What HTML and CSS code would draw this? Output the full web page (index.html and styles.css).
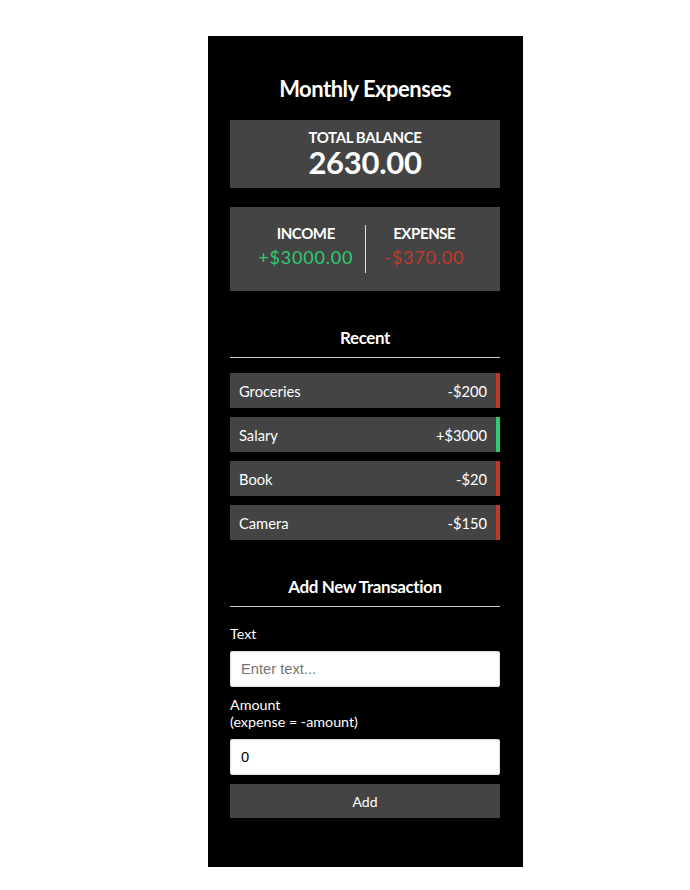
FILE: index.html
```html
<!DOCTYPE html>
<html lang="en">
<head>
<meta charset="utf-8">
<title>Monthly Expenses</title>
<link rel="stylesheet" href="styles.css">
</head>
<body>
<div class="page">
  <div class="app">
    <h2 class="title">Monthly Expenses</h2>
    <div class="balance">
      <h4 class="balance-label">TOTAL BALANCE</h4>
      <h1 class="balance-value">2630.00</h1>
    </div>
    <div class="inc-exp">
      <div class="col">
        <h4 class="col-label">INCOME</h4>
        <p class="money plus">+$3000.00</p>
      </div>
      <div class="col">
        <h4 class="col-label">EXPENSE</h4>
        <p class="money minus">-$370.00</p>
      </div>
    </div>
    <h3 class="section">Recent</h3>
    <ul class="list">
      <li class="item minus-item"><span>Groceries</span><span>-$200</span></li>
      <li class="item plus-item"><span>Salary</span><span>+$3000</span></li>
      <li class="item minus-item"><span>Book</span><span>-$20</span></li>
      <li class="item minus-item"><span>Camera</span><span>-$150</span></li>
    </ul>
    <h3 class="section section-add">Add New Transaction</h3>
    <form class="form">
      <div class="control">
        <label class="label" for="text">Text</label>
        <input class="input" type="text" id="text" placeholder="Enter text...">
      </div>
      <div class="control">
        <label class="label" for="amount">Amount <br>(expense = -amount)</label>
        <input class="input" type="number" id="amount" value="0">
      </div>
      <button class="btn" type="button">Add</button>
    </form>
  </div>
</div>
</body>
</html>
```
FILE: styles.css
```css
* { box-sizing: border-box; }
html, body { margin: 0; padding: 0; background: #fff; }
body { font-family: "Lato", "Liberation Sans", sans-serif; }
.page {
  padding: 36px 0 0 208px;
}
.app {
  width: 315px;
  background: #000;
  color: #fff;
  padding: 39px 23px 49px 22px;
}
.title {
  margin: 0 0 17px;
  text-align: center;
  font-size: 22px;
  font-weight: 700;
  letter-spacing: -0.5px;
  line-height: 28px;
}
.balance {
  background: #444;
  height: 68px;
  padding-top: 8px;
  text-align: center;
}
.balance-label {
  margin: 0;
  font-size: 15px;
  font-weight: 700;
  letter-spacing: -0.4px;
  line-height: 18px;
}
.balance-value {
  margin: 0;
  font-size: 31px;
  font-weight: 700;
  letter-spacing: -0.3px;
  line-height: 32px;
}
.inc-exp {
  background: #444;
  margin-top: 19px;
  height: 84px;
  display: flex;
  align-items: center;
  padding: 18px 17px;
}
.col {
  flex: 1;
  text-align: center;
  height: 100%;
}
.col:first-child { border-right: 1px solid #ddd; }
.col-label {
  margin: 0 0 4px;
  font-size: 15px;
  font-weight: 700;
  letter-spacing: -0.4px;
  line-height: 16px;
}
.money {
  margin: 0;
  font-size: 18px;
  letter-spacing: 0.8px;
  line-height: 24px;
}
.plus { color: #2ecc71; }
.minus { color: #c0392b; }
.section {
  margin: 36px 0 15px;
  padding-bottom: 8px;
  border-bottom: 1px solid #ccc;
  text-align: center;
  font-size: 17px;
  font-weight: 700;
  letter-spacing: -0.4px;
  line-height: 22px;
}
.list {
  list-style: none;
  margin: 0;
  padding: 0;
  display: flex;
  flex-direction: column;
  gap: 9px;
}
.item {
  background: #444;
  height: 35px;
  display: flex;
  justify-content: space-between;
  align-items: center;
  padding: 0 9px 0 9px;
  font-size: 14.7px;
  border-right: 4px solid transparent;
}
.minus-item { border-right-color: #c0392b; }
.plus-item { border-right-color: #2ecc71; }
.section-add { margin-top: 36px; margin-bottom: 14px; }
.form { margin-top: 0; }
.control { margin-top: 18px; }
.label {
  display: block;
  font-size: 14.3px;
  line-height: 17px;
  margin-bottom: 9px;
}
.input {
  display: block;
  width: 100%;
  height: 36px;
  border: 1px solid #ddd;
  border-radius: 2px;
  padding: 0 10px;
  font-family: "Liberation Sans", Arial, sans-serif;
  font-size: 14.7px;
  color: #000;
  background: #fff;
}
.input::placeholder { color: #757575; }
.control + .control { margin-top: 9px; }
.btn {
  display: block;
  width: 100%;
  height: 34px;
  margin-top: 9px;
  background: #444;
  color: #fff;
  border: 0;
  font-family: "Lato", "Liberation Sans", sans-serif;
  font-size: 14px;
}
```
